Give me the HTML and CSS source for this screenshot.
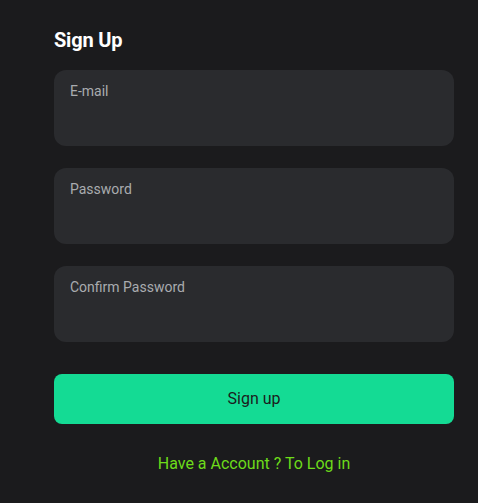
FILE: index.html
```html
<!DOCTYPE html>
<html>
<head>
<meta charset="utf-8">
<link rel="stylesheet" href="styles.css">
</head>
<body>
<div class="page">
  <h1 class="title">Sign Up</h1>
  <form class="form">
    <label class="field"><span class="label">E-mail</span><input class="input" type="email"></label>
    <label class="field"><span class="label">Password</span><input class="input" type="password"></label>
    <label class="field"><span class="label">Confirm Password</span><input class="input" type="password"></label>
    <button class="btn" type="button">Sign up</button>
  </form>
  <a class="link" href="#">Have a Account ? To Log in</a>
</div>
</body>
</html>
```
FILE: styles.css
```css
html, body {
  margin: 0;
  background: #1b1b1d;
  height: 100%;
}
body {
  font-family: Roboto, "Liberation Sans", sans-serif;
}
.page {
  width: 400px;
  padding: 28px 0 0 54px;
  display: flex;
  flex-direction: column;
}
.title {
  margin: 0;
  font-size: 20px;
  line-height: 24px;
  font-weight: 700;
  letter-spacing: -0.2px;
  color: #ffffff;
}
.form {
  margin-top: 18px;
  display: flex;
  flex-direction: column;
  gap: 22px;
}
.field {
  display: flex;
  flex-direction: column;
  height: 76px;
  box-sizing: border-box;
  padding: 13px 16px 0;
  background: #2a2b2e;
  border-radius: 12px;
}
.label {
  font-size: 14px;
  line-height: 16px;
  color: #a9abaf;
}
.input {
  background: transparent;
  border: 0;
  outline: none;
  color: #fff;
  font: inherit;
  padding: 0;
  margin-top: 8px;
  height: 24px;
}
.btn {
  margin-top: 10px;
  height: 50px;
  padding: 0 0 2px;
  border: 0;
  border-radius: 8px;
  background: #14db94;
  color: #1b1b1d;
  font-family: inherit;
  font-size: 16px;
  cursor: pointer;
}
.link {
  margin-top: 30px;
  text-align: center;
  color: #6ddc1a;
  text-decoration: none;
  font-size: 16px;
  line-height: 19px;
}
```
